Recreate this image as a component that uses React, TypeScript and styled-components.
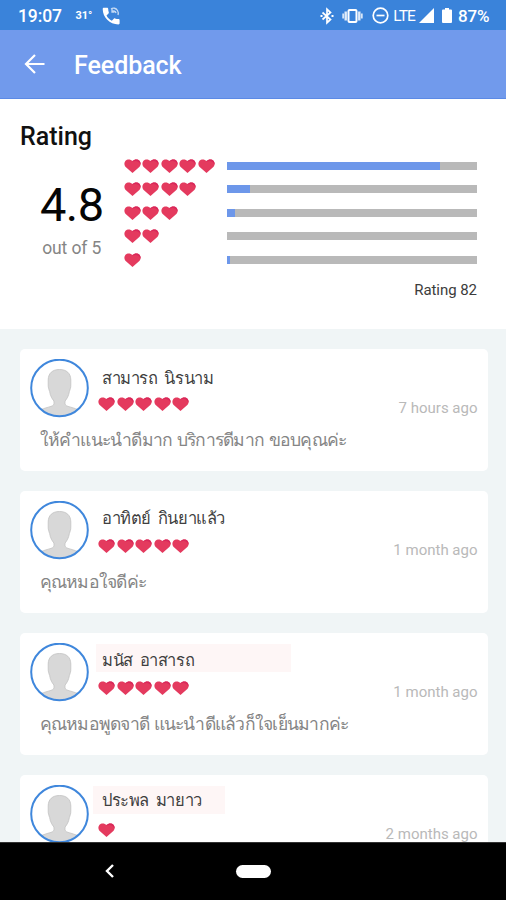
import React from 'react';
import styled, { createGlobalStyle } from 'styled-components';

const GlobalStyle = createGlobalStyle`
  *, *::before, *::after { box-sizing: border-box; }
  body { margin: 0; background: #f0f5f6; font-family: Roboto, "Noto Sans", sans-serif; overflow: hidden; }
`;

const Screen = styled.div`
  width: 506px;
  height: 900px;
  display: flex;
  flex-direction: column;
  overflow: hidden;
  background: #f0f5f6;
`;

const StatusBar = styled.header`
  height: 30px;
  flex: none;
  display: flex;
  align-items: center;
  justify-content: space-between;
  padding: 1px 16.5px 0 18px;
  background: #3a83da;
  color: #fff;
`;

const StatusGroup = styled.div`
  display: flex;
  align-items: center;
  svg { display: block; flex: none; }
`;

const StatusText = styled.span<{ $size: number; $weight?: number; $ml?: number; $spacing?: number }>`
  font-size: ${(p) => p.$size}px;
  font-weight: ${(p) => p.$weight ?? 500};
  margin-left: ${(p) => p.$ml ?? 0}px;
  letter-spacing: ${(p) => p.$spacing ?? 0}px;
  line-height: 20px;
  white-space: nowrap;
`;

const IconSlot = styled.span<{ $ml: number }>`
  margin-left: ${(p) => p.$ml}px;
`;

const AppBar = styled.div`
  height: 69px;
  flex: none;
  display: flex;
  align-items: center;
  padding: 0 24px;
  background: #719aec;
  border-bottom: 1px solid #5b8ae6;
  color: #fff;
`;

const BackButton = styled.button`
  display: flex;
  padding: 0;
  border: 0;
  background: none;
  color: inherit;
`;

const Title = styled.h1`
  margin: 3px 0 0 28px;
  font-size: 25px;
  line-height: 30px;
  font-weight: 500;
  letter-spacing: -0.05px;
`;

const Summary = styled.section`
  height: 230px;
  flex: none;
  padding: 23px 29px 0 20px;
  background: #fff;
`;

const SummaryTitle = styled.h2`
  margin: 0;
  font-size: 25px;
  line-height: 30px;
  font-weight: 500;
  color: #111;
`;

const SummaryBody = styled.div`
  display: flex;
  margin-top: 2px;
`;

const Score = styled.div`
  width: 103.5px;
  padding-top: 24px;
  display: flex;
  flex-direction: column;
  align-items: center;
`;

const ScoreValue = styled.div`
  font-size: 47px;
  line-height: 54px;
  letter-spacing: -0.6px;
  color: #050505;
`;

const ScoreCaption = styled.div`
  margin-top: 6px;
  font-size: 17.5px;
  line-height: 20px;
  letter-spacing: -0.1px;
  color: #858585;
`;

const Distribution = styled.div`
  flex: 1;
`;

const DistributionRow = styled.div`
  height: 23.5px;
  display: flex;
  align-items: center;
`;

const Hearts = styled.div`
  width: 103px;
  flex: none;
  display: flex;
  gap: 1.5px;
  svg { display: block; flex: none; }
`;

const Track = styled.div`
  flex: 1;
  height: 8px;
  background: #b9b9b9;
`;

const Fill = styled.div`
  height: 100%;
  background: #6d97ea;
`;

const Total = styled.div`
  margin-top: 10px;
  text-align: right;
  font-size: 15px;
  line-height: 16px;
  letter-spacing: -0.05px;
  color: #3c3c3c;
`;

const Feed = styled.main`
  flex: 1;
  min-height: 0;
  overflow: hidden;
  padding: 19.5px 18.5px 0 20px;
  display: flex;
  flex-direction: column;
  gap: 19.5px;
`;

const Card = styled.article`
  height: 122.5px;
  flex: none;
  padding: 10px 10px 0;
  border-radius: 5px;
  background: #fff;
`;

const CardHead = styled.div`
  height: 59px;
  display: flex;
`;

const AvatarFrame = styled.div`
  width: 59px;
  height: 59px;
  flex: none;
  svg { display: block; }
`;

const Person = styled.div`
  flex: 1;
  margin-left: 9px;
  padding-top: 1px;
`;

const NameBand = styled.div<{ $inset: number; $width: number; $top: number; $marked: boolean }>`
  height: 28px;
  width: ${(p) => p.$width}px;
  margin-left: ${(p) => -p.$inset}px;
  margin-bottom: 9.5px;
  padding: ${(p) => p.$top}px 0 0 ${(p) => p.$inset + 4}px;
  background: ${(p) => (p.$marked ? '#fef6f6' : 'transparent')};
`;

const Name = styled.span`
  display: block;
  font-size: 16.5px;
  line-height: 24px;
  letter-spacing: -0.45px;
  word-spacing: 3.5px;
  white-space: nowrap;
  color: #404040;
`;

const Time = styled.time`
  align-self: flex-start;
  margin-top: 40px;
  font-size: 15px;
  line-height: 18px;
  white-space: nowrap;
  color: #b9b9b9;
`;

const Comment = styled.p`
  margin: 9px 0 0 9.5px;
  font-size: 17.5px;
  line-height: 26px;
  letter-spacing: -0.75px;
  word-spacing: 1px;
  white-space: nowrap;
  color: #858585;
`;

const NavBar = styled.nav`
  height: 58.5px;
  flex: none;
  display: grid;
  grid-template-columns: 236px 35px 1fr;
  align-items: center;
  background: #000;
  border-top: 1px solid #333;
  svg { display: block; margin-left: 105px; }
`;

const HomePill = styled.div`
  height: 13.5px;
  border-radius: 7px;
  background: #fff;
`;

const Heart = () => (
  <svg width="17" height="14" viewBox="0 0 17 14">
    <path
      d="M8.500 13.900 1.400 7.700C0 6.200 0 3.400 1.500 1.700 3.300-.1 6.700 0 8.500 2.100 10.300 0 13.700-.1 15.500 1.700c1.500 1.700 1.500 4.500.1 6Z"
      fill="#e43a5e"
    />
    <path d="M8.500 2.100C10.300 0 13.700-.1 15.500 1.700c1 1.100 1.300 2.700 1 4-.7-2-2.300-3.500-4.600-3.700-1.200-.1-2.300.2-3.400.7Z" fill="#d9285a" />
  </svg>
);

const HeartRow = ({ count }: { count: number }) => (
  <Hearts>
    {Array.from({ length: count }, (_, i) => (
      <Heart key={i} />
    ))}
  </Hearts>
);

const Avatar = ({ id }: { id: string }) => (
  <AvatarFrame>
    <svg width="59" height="59" viewBox="0 0 59 59">
      <clipPath id={id}>
        <circle cx="29.5" cy="29" r="28" />
      </clipPath>
      <circle cx="29.5" cy="29" r="28.3" fill="#fff" />
      <path
        clipPath={`url(#${id})`}
        d="M29.5 10.500c-7 0-11.300 3.800-11.300 10.500v5c0 2.800.5 4 1.400 6.400.8 5 2.600 7.400 4.300 9.600.6 3.500-.4 4.600-2.900 5.400-3.600 1.100-6.500 1.700-10 3.300V60h37v-9.300c-3.500-1.600-6.400-2.200-10-3.300-2.500-.8-3.500-1.900-2.900-5.400 1.700-2.200 3.500-4.600 4.300-9.600.9-2.400 1.400-3.600 1.400-6.400v-5c0-6.700-4.300-10.500-11.300-10.500Z"
        fill="#d8d8d8"
        stroke="#c2c2c2"
        strokeWidth="0.8"
      />
      <circle cx="29.5" cy="29" r="28.3" fill="none" stroke="#3f87dc" strokeWidth="2" />
    </svg>
  </AvatarFrame>
);

const distribution = [
  { stars: 5, share: 85.2 },
  { stars: 4, share: 9.2 },
  { stars: 3, share: 3.2 },
  { stars: 2, share: 0 },
  { stars: 1, share: 1.2 },
];

const reviews = [
  { name: 'สามารถ นิรนาม', stars: 5, time: '7 hours ago', text: 'ให้คำแนะนำดีมาก บริการดีมาก ขอบคุณค่ะ', marked: false, inset: 0, width: 150, top: 7 },
  { name: 'อาทิตย์ กินยาแล้ว', stars: 5, time: '1 month ago', text: 'คุณหมอใจดีค่ะ', marked: false, inset: 0, width: 150, top: 5 },
  { name: 'มนัส อาสารถ', stars: 5, time: '1 month ago', text: 'คุณหมอพูดจาดี แนะนำดีแล้วก็ใจเย็นมากค่ะ', marked: true, inset: 2, width: 195, top: 5 },
  { name: 'ประพล มายาว', stars: 1, time: '2 months ago', text: '', marked: true, inset: 5, width: 132, top: 3 },
];

export default function App() {
  return (
    <>
      <GlobalStyle />
      <Screen>
        <StatusBar>
          <StatusGroup>
            <StatusText $size={17.5} $spacing={-0.1}>19:07</StatusText>
            <StatusText $size={11} $weight={700} $ml={13.5}>31°</StatusText>
            <IconSlot $ml={9.5}>
              <svg width="18" height="18" viewBox="0 0 18 18" fill="#fff">
                <path d="M.7 2C.7 1.200 1.200.7 2 .7h3c.7 0 1.200.5 1.200 1.200 0 1.200.2 2.300.6 3.400.1.400 0 .9-.3 1.200L4.500 8.400c1.200 2.300 3 4.100 5.300 5.300l2-2c.3-.3.8-.4 1.200-.3 1.100.4 2.200.6 3.400.6.700 0 1.200.5 1.200 1.200v3c0 .7-.5 1.200-1.200 1.200C7.700 17.400.7 10.300.7 2Z" />
                <path d="M9 2c2-1.500 5-1 6.500 1.500.8 1.300 1 3 .5 4.500M10.500 4.500c1-1 3-.5 3.500 1.500M10 2v3h2.500" fill="none" stroke="#fff" strokeWidth="1.300" opacity=".7" />
              </svg>
            </IconSlot>
          </StatusGroup>
          <StatusGroup>
            <svg width="14" height="18" viewBox="0 0 14 18" fill="none" stroke="#fff" strokeWidth="1.700">
              <path d="m2.500 5.500 8 7L7 15.700V2.300l3.500 3.200-8 7" />
              <path d="M.5 9h2M11.500 9h2" strokeWidth="2" />
            </svg>
            <IconSlot $ml={8}>
              <svg width="21" height="16" viewBox="0 0 21 16" fill="none" stroke="#fff">
                <rect x="6.500" y="2" width="8" height="12" rx="1" strokeWidth="2" />
                <path d="M3.700 3.500v9M17.300 3.500v9" strokeWidth="2.400" opacity=".85" />
                <path d="M1.200 5.500v5M19.800 5.500v5" strokeWidth="1.800" opacity=".8" />
              </svg>
            </IconSlot>
            <IconSlot $ml={9}>
              <svg width="17" height="17" viewBox="0 0 17 17" fill="none" stroke="#fff" strokeWidth="1.700">
                <circle cx="8.500" cy="8.500" r="7.300" />
                <path d="M4.500 8.500h8" />
              </svg>
            </IconSlot>
            <StatusText $size={15.5} $weight={400} $ml={4} $spacing={-0.9}>LTE</StatusText>
            <IconSlot $ml={4}>
              <svg width="15" height="15" viewBox="0 0 15 15"><path d="M15 0v15H0Z" fill="#fff" /></svg>
            </IconSlot>
            <IconSlot $ml={8.5}>
              <svg width="10" height="15" viewBox="0 0 10 15"><path d="M3 0h4v1.500h2q1 0 1 1V14q0 1-1 1H1q-1 0-1-1V2.500q0-1 1-1h2Z" fill="#fff" /></svg>
            </IconSlot>
            <StatusText $size={17} $ml={5.5} $spacing={-0.1}>87%</StatusText>
          </StatusGroup>
        </StatusBar>

        <AppBar>
          <BackButton aria-label="Back">
            <svg width="22" height="22" viewBox="0 0 22 22" fill="none" stroke="#fff" strokeWidth="2.200">
              <path d="M20.500 11H3M11 2l-9 9 9 9" />
            </svg>
          </BackButton>
          <Title>Feedback</Title>
        </AppBar>

        <Summary>
          <SummaryTitle>Rating</SummaryTitle>
          <SummaryBody>
            <Score>
              <ScoreValue>4.8</ScoreValue>
              <ScoreCaption>out of 5</ScoreCaption>
            </Score>
            <Distribution>
              {distribution.map((row) => (
                <DistributionRow key={row.stars}>
                  <HeartRow count={row.stars} />
                  <Track>
                    <Fill style={{ width: `${row.share}%` }} />
                  </Track>
                </DistributionRow>
              ))}
              <Total>Rating 82</Total>
            </Distribution>
          </SummaryBody>
        </Summary>

        <Feed>
          {reviews.map((r, i) => (
            <Card key={r.name}>
              <CardHead>
                <Avatar id={`avatar-${i}`} />
                <Person>
                  <NameBand $inset={r.inset} $width={r.width} $top={r.top} $marked={r.marked}>
                    <Name>{r.name}</Name>
                  </NameBand>
                  <HeartRow count={r.stars} />
                </Person>
                <Time>{r.time}</Time>
              </CardHead>
              <Comment>{r.text}</Comment>
            </Card>
          ))}
        </Feed>

        <NavBar>
          <svg width="9" height="14" viewBox="0 0 9 14" fill="none" stroke="#fff" strokeWidth="2.400">
            <path d="M8 1 2 7l6 6" />
          </svg>
          <HomePill />
        </NavBar>
      </Screen>
    </>
  );
}
